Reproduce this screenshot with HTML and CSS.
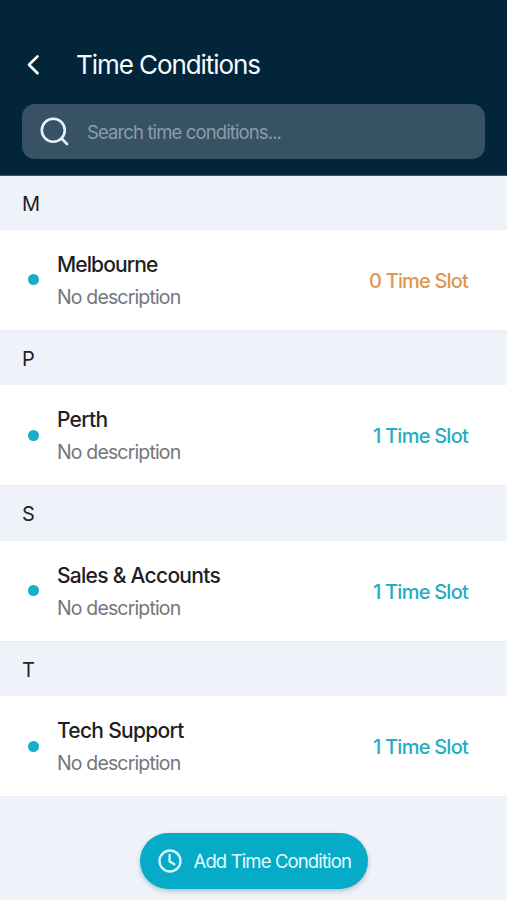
FILE: index.html
```html
<!DOCTYPE html>
<html lang="en">
<head>
<meta charset="utf-8">
<title>Time Conditions</title>
<link rel="stylesheet" href="styles.css">
</head>
<body>
<header class="header">
  <div class="title-bar">
    <svg class="back" width="16" height="24" viewBox="0 0 16 24"><path d="M12.5 3.4 4 11.8l8.5 8.4"/></svg>
    <h1 class="title">Time Conditions</h1>
  </div>
  <div class="search">
    <svg class="search-icon" width="30" height="30" viewBox="0 0 30 30"><circle cx="13.3" cy="13.3" r="11.5"/><path d="m21.5 21.5 5.5 5.5"/></svg>
    <span class="placeholder">Search time conditions...</span>
  </div>
</header>
<main class="list">
  <h2 class="letter">M</h2>
  <article class="row">
    <span class="dot"></span>
    <div class="info"><h3 class="name name-tight">Melbourne</h3><p class="desc">No description</p></div>
    <span class="slots slots-empty">0 Time Slot</span>
  </article>
  <h2 class="letter">P</h2>
  <article class="row">
    <span class="dot"></span>
    <div class="info"><h3 class="name">Perth</h3><p class="desc">No description</p></div>
    <span class="slots">1 Time Slot</span>
  </article>
  <h2 class="letter">S</h2>
  <article class="row">
    <span class="dot"></span>
    <div class="info"><h3 class="name">Sales &amp; Accounts</h3><p class="desc">No description</p></div>
    <span class="slots">1 Time Slot</span>
  </article>
  <h2 class="letter">T</h2>
  <article class="row">
    <span class="dot"></span>
    <div class="info"><h3 class="name">Tech Support</h3><p class="desc">No description</p></div>
    <span class="slots">1 Time Slot</span>
  </article>
</main>
<footer class="footer">
  <button class="add" type="button">
    <svg class="clock" width="24" height="24" viewBox="0 0 24 24"><circle cx="12" cy="12" r="10.5"/><path d="M11.6 5.8v6.6l4.8 2.8"/></svg>
    <span>Add Time Condition</span>
  </button>
</footer>
</body>
</html>
```

FILE: styles.css
```css
* { box-sizing: border-box; }

body {
  margin: 0;
  height: 900px;
  overflow: hidden;
  background: #eff3f9;
  color: #1c1f26;
  font-family: Inter, "Liberation Sans", sans-serif;
}

h1, h2, h3, p { margin: 0; font-weight: 400; }

svg { flex: none; fill: none; stroke: #e6f3fb; stroke-linecap: round; stroke-linejoin: round; }

.header {
  height: 176px;
  padding: 44px 22px 0;
  background: #022539;
  border-bottom: 1px solid #3f5263;
}

.title-bar { display: flex; align-items: center; height: 41px; }
.back { margin-left: 3px; stroke: #fff; stroke-width: 2.7; }
.title { margin-left: 35px; font-size: 26px; line-height: 40px; letter-spacing: -1.07px; color: #f5fbff; }

.search {
  display: flex;
  align-items: center;
  height: 55px;
  margin-top: 19px;
  padding-left: 18px;
  border-radius: 13px;
  background: #375265;
}
.search-icon { stroke-width: 2.6; }
.placeholder { margin-left: 17px; padding-top: 1px; font-size: 18.5px; letter-spacing: -0.88px; color: #8c9ca9; }

.letter { height: 54.7px; padding-left: 22px; font-size: 20px; line-height: 56px; }
.letter:first-child { height: 54px; }
.row {
  display: flex;
  align-items: center;
  height: 100.8px;
  padding: 0 39px 0 28px;
  background: #fff;
  border-bottom: 1px solid #e6edf5;
}
.dot { width: 11px; height: 11px; border-radius: 50%; background: #18adc8; }
.info { flex: 1; margin-left: 18px; padding-top: 1px; }
.name { font-size: 21px; font-weight: 500; line-height: 33px; letter-spacing: -0.72px; }
.name-tight { letter-spacing: -0.9px; }
.desc { font-size: 19.5px; line-height: 32px; letter-spacing: -0.85px; color: #74767b; }
.slots { padding-top: 2px; font-size: 20px; font-weight: 500; letter-spacing: -0.76px; color: #24adc1; }
.slots-empty { letter-spacing: -0.83px; color: #df9650; }

.footer { display: flex; justify-content: center; padding-top: 36px; }
.add {
  display: flex;
  align-items: center;
  width: 228px;
  height: 56px;
  padding: 0 0 0 18px;
  border: 0;
  border-radius: 28px;
  background: #06abc7;
  box-shadow: 0 2px 5px rgba(20, 55, 75, 0.28);
  color: #e4fbff;
  font: 400 18.5px Inter, "Liberation Sans", sans-serif;
  letter-spacing: -0.87px;
  white-space: nowrap;
}
.clock { margin-right: 12px; stroke: #d8fbff; stroke-width: 2.3; }
```
